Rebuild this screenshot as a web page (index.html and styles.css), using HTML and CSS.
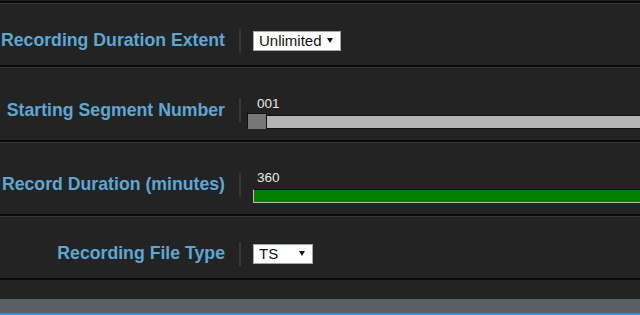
FILE: index.html
```html
<!DOCTYPE html>
<html lang="en">
<head>
    <meta charset="UTF-8">
    <title>Recording Settings</title>
    <link rel="stylesheet" href="styles.css">
</head>
<body>
    <div class="top-edge"></div>

    <div class="settings">
        <div class="row">
            <div class="label">Recording Duration Extent</div>
            <div class="divider"></div>
            <div class="control">
                <span class="dropdown dropdown-wide"><span>Unlimited</span><span class="arrow"></span></span>
            </div>
        </div>

        <div class="row row-slider row-segment">
            <div class="label">Starting Segment Number</div>
            <div class="divider"></div>
            <div class="control">
                <div class="slider">
                    <div class="slider-value">001</div>
                    <div class="slider-track"><span class="slider-thumb"></span></div>
                </div>
            </div>
        </div>

        <div class="row row-slider">
            <div class="label">Record Duration (minutes)</div>
            <div class="divider"></div>
            <div class="control">
                <div class="slider">
                    <div class="slider-value">360</div>
                    <div class="progress-bar"></div>
                </div>
            </div>
        </div>

        <div class="row">
            <div class="label">Recording File Type</div>
            <div class="divider"></div>
            <div class="control">
                <span class="dropdown dropdown-small"><span>TS</span><span class="arrow"></span></span>
            </div>
        </div>
    </div>

    <div class="footer-bar"></div>
</body>
</html>
```

FILE: styles.css
```css
body {
    font-family: "Liberation Sans", Arial, sans-serif;
    background: #232323;
    margin: 0;
    padding: 0;
    overflow: hidden;
}

.top-edge {
    height: 1px;
    background: #1b1b1b;
    border-bottom: 2px solid #080808;
}

.row {
    display: flex;
    align-items: center;
    box-sizing: border-box;
    height: 64px;
    padding-top: 12px;
    border-top: 1px solid #383838;
    border-bottom: 2px solid #090909;
}

.row-slider {
    height: 74px;
}

.row-segment {
    height: 75px;
}

.label {
    width: 225px;
    padding-right: 14px;
    text-align: right;
    font-weight: bold;
    font-size: 17.7px;
    color: #5ea7d3;
    white-space: nowrap;
    flex-shrink: 0;
}

.divider {
    width: 2px;
    height: 24px;
    background: #383838;
    flex-shrink: 0;
}

.control {
    flex: 1;
    min-width: 0;
    padding-left: 12px;
    overflow: hidden;
}

.dropdown {
    display: flex;
    align-items: center;
    justify-content: space-between;
    box-sizing: border-box;
    height: 20px;
    padding: 0 7px 0 5px;
    background: #fff;
    border: 1px solid #a6a6a6;
    font-size: 15px;
    color: #111;
}

.dropdown-wide {
    width: 88px;
}

.dropdown-small {
    width: 60px;
}

.arrow {
    width: 0;
    height: 0;
    border-left: 3px solid transparent;
    border-right: 3px solid transparent;
    border-top: 5px solid #111;
}

.slider {
    padding-top: 4px;
}

.slider-value {
    padding-left: 4px;
    margin-bottom: 4px;
    font-size: 13.5px;
    line-height: 15px;
    color: #e8e8e8;
}

/* track and bar run on past the right edge of the panel */
.slider-track {
    position: relative;
    box-sizing: border-box;
    width: calc(100% + 10px);
    height: 14px;
    background: #b4b4b4;
    border: 1px solid #111;
}

.slider-thumb {
    position: absolute;
    left: -7px;
    top: -3px;
    box-sizing: border-box;
    width: 20px;
    height: 18px;
    background: #777;
    border: 1px solid #111;
}

.progress-bar {
    box-sizing: border-box;
    width: calc(100% + 10px);
    height: 14px;
    background: #008000;
    border: 1px solid #bdbdbd;
    border-top-color: #0a0a0a;
}

.footer-bar {
    margin-top: 19px;
    height: 14px;
    background: #5b5e62;
    border-bottom: 2px solid #3b8ed4;
}
```
